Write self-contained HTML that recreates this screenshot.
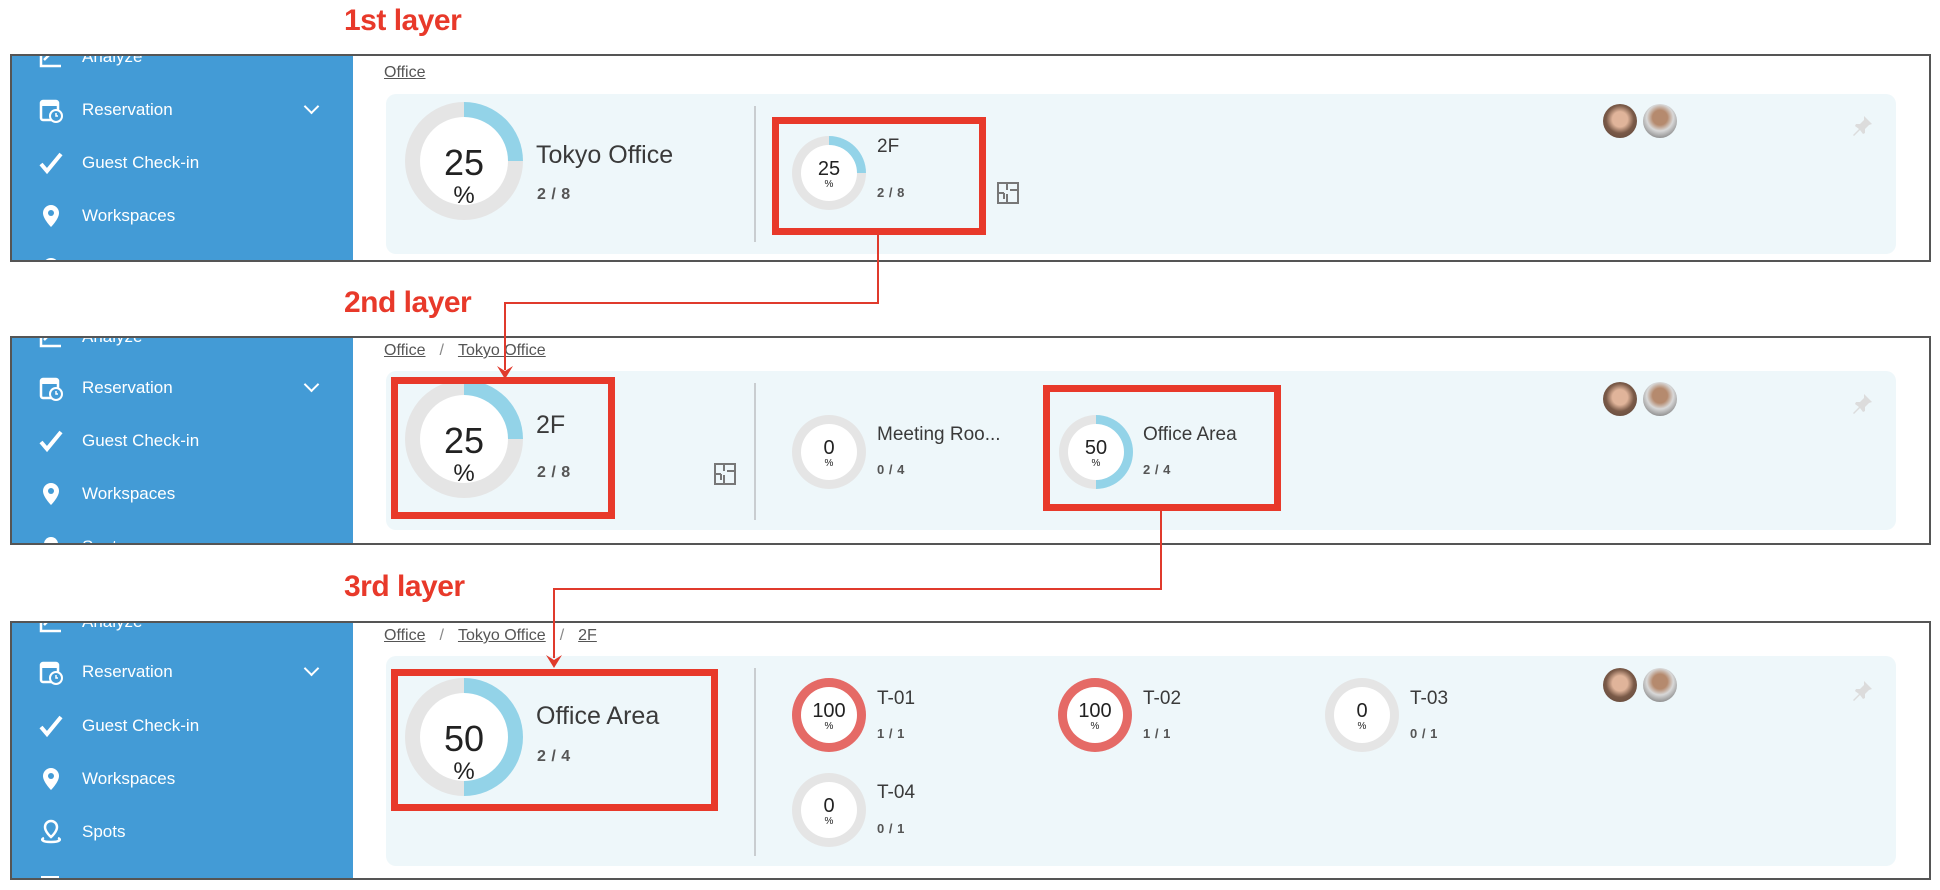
<!DOCTYPE html>
<html><head><meta charset="utf-8"><style>
*{margin:0;padding:0;box-sizing:border-box}
body{width:1940px;height:890px;background:#fff;position:relative;overflow:hidden;font-family:"Liberation Sans",sans-serif;color:#333}
.abs{position:absolute}
.lbl{position:absolute;left:344px;font-size:30px;font-weight:bold;color:#e8392a;letter-spacing:-0.5px}
.panel{position:absolute;left:10px;width:1921px;border:2px solid #555;background:#fff;overflow:hidden}
.side{position:absolute;left:0;top:0;bottom:0;width:341px;background:#439bd6;color:#fff;overflow:hidden}
.item{position:absolute;left:0;width:341px;height:30px;font-size:17px}
.item .ic{position:absolute;left:26px;top:2px;width:26px;height:26px}
.item .tx{position:absolute;left:70px;top:5px}
.chev{position:absolute;left:294px;top:6px;width:11px;height:11px;border-right:2px solid #fff;border-bottom:2px solid #fff;transform:rotate(45deg)}
.bc{position:absolute;left:384px;font-size:16px;color:#555}
.bc u{text-decoration:underline}
.bc span.sep{margin:0 14px;color:#888}
.card{position:absolute;left:386px;width:1510px;background:#eef7fa;border-radius:10px}
.div{position:absolute;left:745px;width:2px;background:#c9cdd0}
.donut{position:absolute;border-radius:50%}
.donut .in{position:absolute;border-radius:50%;background:#fff;text-align:center;color:#222}
.big{width:118px;height:118px}
.big .in{left:15px;top:15px;width:88px;height:88px}
.big .n{font-size:36px;line-height:36px;margin-top:28px}
.big .p{font-size:24px;line-height:22px;margin-top:4px}
.sm{width:74px;height:74px}
.sm .in{left:9px;top:9px;width:56px;height:56px}
.sm .n{font-size:20px;line-height:20px;margin-top:14px}
.sm .p{font-size:10px;line-height:12px}
.t1{position:absolute;font-size:25px;color:#3a3a3a}
.c1{position:absolute;font-size:16px;font-weight:bold;color:#555;letter-spacing:0.5px}
.t2{position:absolute;font-size:19px;color:#3a3a3a}
.c2{position:absolute;font-size:13px;font-weight:bold;color:#555;letter-spacing:0.5px}
.rb{position:absolute;border:7px solid #e8392a}
.ln{position:absolute;background:#e03a2c;z-index:5}
.av{position:absolute;width:34px;height:34px;border-radius:50%}
</style></head><body>

<div class="lbl" style="top:4px">1st layer</div>
<div class="lbl" style="top:286px">2nd layer</div>
<div class="lbl" style="top:570px">3rd layer</div>

<!-- PANEL 1 -->
<div class="panel" style="top:54px;height:208px">
 <div class="side">
  <div class="item" style="top:-14px"><svg class="ic" viewBox="0 0 26 26"><path d="M3 2v20h20" stroke="#fff" stroke-width="2.5" fill="none"/><path d="M6 16l7-7" stroke="#fff" stroke-width="2.5"/></svg><span class="tx">Analyze</span></div>
  <div class="item" style="top:39px"><svg class="ic" viewBox="0 0 26 26"><rect x="3" y="4" width="17" height="19" rx="2" fill="none" stroke="#fff" stroke-width="2.5"/><rect x="3" y="4" width="17" height="5" fill="#fff"/><circle cx="18" cy="19" r="6" fill="#439bd6" stroke="#fff" stroke-width="2"/><path d="M18 16v3h2" stroke="#fff" stroke-width="1.5" fill="none"/></svg><span class="tx">Reservation</span><div class="chev"></div></div>
  <div class="item" style="top:92px"><svg class="ic" viewBox="0 0 26 26"><path d="M3 14l6 7L23 4" stroke="#fff" stroke-width="4" fill="none"/></svg><span class="tx">Guest Check-in</span></div>
  <div class="item" style="top:145px"><svg class="ic" viewBox="0 0 26 26"><path d="M13 2a8 8 0 0 1 8 8c0 6-8 14-8 14S5 16 5 10a8 8 0 0 1 8-8z" fill="#fff"/><circle cx="13" cy="10" r="3" fill="#439bd6"/></svg><span class="tx">Workspaces</span></div>
  <div class="item" style="top:198px"><svg class="ic" viewBox="0 0 26 26"><circle cx="13" cy="10" r="8" fill="#fff"/></svg></div>
 </div>
</div>
<div class="bc" style="top:64px"><u>Office</u></div>
<div class="card" style="top:94px;height:160px"></div>
<div class="donut big" style="left:405px;top:102px;background:conic-gradient(#93d3e8 0 25%,#e5e5e5 0)"><div class="in"><div class="n">25</div><div class="p">%</div></div></div>
<div class="t1" style="left:536px;top:141px">Tokyo Office</div>
<div class="c1" style="left:537px;top:186px">2 / 8</div>
<div class="div" style="top:106px;height:136px;left:754px"></div>
<div class="donut sm" style="left:792px;top:136px;background:conic-gradient(#93d3e8 0 25%,#e5e5e5 0)"><div class="in"><div class="n">25</div><div class="p">%</div></div></div>
<div class="t2" style="left:877px;top:136px">2F</div>
<div class="c2" style="left:877px;top:185px">2 / 8</div>
<svg class="abs" style="left:996px;top:181px" width="24" height="24" viewBox="0 0 24 24"><path d="M2 2h20v20H2zM2 12h6M11 2v7M11 13v9M14 9h8M8 12v6" stroke="#777" stroke-width="2" fill="none"/></svg>
<div class="rb" style="left:772px;top:117px;width:214px;height:118px"></div>
<div class="av" style="left:1603px;top:104px;background:radial-gradient(circle at 50% 45%,#e0b49a 0 30%,#7a5a48 55%,#5a4438 100%)"></div>
<div class="av" style="left:1643px;top:104px;background:radial-gradient(circle at 50% 40%,#b58a6e 0 28%,#d8d8d8 50%,#555 100%)"></div>
<svg class="abs" style="left:1850px;top:114px" width="24" height="24" viewBox="0 0 24 24"><path d="M14 2l8 8-3 1-4 4 0 4-2 1-3-4-6 6-1-1 6-6-4-3 1-2 4 0 4-4z" fill="#dcdcdc"/></svg>

<!-- PANEL 2 -->
<div class="panel" style="top:336px;height:209px">
 <div class="side">
  <div class="item" style="top:-16px"><svg class="ic" viewBox="0 0 26 26"><path d="M3 2v20h20" stroke="#fff" stroke-width="2.5" fill="none"/><path d="M6 16l7-7" stroke="#fff" stroke-width="2.5"/></svg><span class="tx">Analyze</span></div>
  <div class="item" style="top:35px"><svg class="ic" viewBox="0 0 26 26"><rect x="3" y="4" width="17" height="19" rx="2" fill="none" stroke="#fff" stroke-width="2.5"/><rect x="3" y="4" width="17" height="5" fill="#fff"/><circle cx="18" cy="19" r="6" fill="#439bd6" stroke="#fff" stroke-width="2"/><path d="M18 16v3h2" stroke="#fff" stroke-width="1.5" fill="none"/></svg><span class="tx">Reservation</span><div class="chev"></div></div>
  <div class="item" style="top:88px"><svg class="ic" viewBox="0 0 26 26"><path d="M3 14l6 7L23 4" stroke="#fff" stroke-width="4" fill="none"/></svg><span class="tx">Guest Check-in</span></div>
  <div class="item" style="top:141px"><svg class="ic" viewBox="0 0 26 26"><path d="M13 2a8 8 0 0 1 8 8c0 6-8 14-8 14S5 16 5 10a8 8 0 0 1 8-8z" fill="#fff"/><circle cx="13" cy="10" r="3" fill="#439bd6"/></svg><span class="tx">Workspaces</span></div>
  <div class="item" style="top:194px"><svg class="ic" viewBox="0 0 26 26"><circle cx="13" cy="10" r="7" fill="#fff"/></svg><span class="tx">Spots</span></div>
 </div>
</div>
<div class="bc" style="top:342px"><u>Office</u><span class="sep">/</span><u>Tokyo Office</u></div>
<div class="card" style="top:371px;height:159px"></div>
<div class="donut big" style="left:405px;top:380px;background:conic-gradient(#93d3e8 0 25%,#e5e5e5 0)"><div class="in"><div class="n">25</div><div class="p">%</div></div></div>
<div class="t1" style="left:536px;top:411px">2F</div>
<div class="c1" style="left:537px;top:464px">2 / 8</div>
<svg class="abs" style="left:713px;top:462px" width="24" height="24" viewBox="0 0 24 24"><path d="M2 2h20v20H2zM2 12h6M11 2v7M11 13v9M14 9h8M8 12v6" stroke="#777" stroke-width="2" fill="none"/></svg>
<div class="rb" style="left:391px;top:377px;width:224px;height:142px"></div>
<div class="div" style="top:383px;height:137px;left:754px"></div>
<div class="donut sm" style="left:792px;top:415px;background:#e5e5e5"><div class="in"><div class="n">0</div><div class="p">%</div></div></div>
<div class="t2" style="left:877px;top:424px">Meeting Roo...</div>
<div class="c2" style="left:877px;top:462px">0 / 4</div>
<div class="donut sm" style="left:1059px;top:415px;background:conic-gradient(#93d3e8 0 50%,#e5e5e5 0)"><div class="in"><div class="n">50</div><div class="p">%</div></div></div>
<div class="t2" style="left:1143px;top:424px">Office Area</div>
<div class="c2" style="left:1143px;top:462px">2 / 4</div>
<div class="rb" style="left:1043px;top:385px;width:238px;height:126px"></div>
<div class="av" style="left:1603px;top:382px;background:radial-gradient(circle at 50% 45%,#e0b49a 0 30%,#7a5a48 55%,#5a4438 100%)"></div>
<div class="av" style="left:1643px;top:382px;background:radial-gradient(circle at 50% 40%,#b58a6e 0 28%,#d8d8d8 50%,#555 100%)"></div>
<svg class="abs" style="left:1850px;top:392px" width="24" height="24" viewBox="0 0 24 24"><path d="M14 2l8 8-3 1-4 4 0 4-2 1-3-4-6 6-1-1 6-6-4-3 1-2 4 0 4-4z" fill="#dcdcdc"/></svg>

<!-- PANEL 3 -->
<div class="panel" style="top:621px;height:259px">
 <div class="side">
  <div class="item" style="top:-16px"><svg class="ic" viewBox="0 0 26 26"><path d="M3 2v20h20" stroke="#fff" stroke-width="2.5" fill="none"/><path d="M6 16l7-7" stroke="#fff" stroke-width="2.5"/></svg><span class="tx">Analyze</span></div>
  <div class="item" style="top:34px"><svg class="ic" viewBox="0 0 26 26"><rect x="3" y="4" width="17" height="19" rx="2" fill="none" stroke="#fff" stroke-width="2.5"/><rect x="3" y="4" width="17" height="5" fill="#fff"/><circle cx="18" cy="19" r="6" fill="#439bd6" stroke="#fff" stroke-width="2"/><path d="M18 16v3h2" stroke="#fff" stroke-width="1.5" fill="none"/></svg><span class="tx">Reservation</span><div class="chev"></div></div>
  <div class="item" style="top:88px"><svg class="ic" viewBox="0 0 26 26"><path d="M3 14l6 7L23 4" stroke="#fff" stroke-width="4" fill="none"/></svg><span class="tx">Guest Check-in</span></div>
  <div class="item" style="top:141px"><svg class="ic" viewBox="0 0 26 26"><path d="M13 2a8 8 0 0 1 8 8c0 6-8 14-8 14S5 16 5 10a8 8 0 0 1 8-8z" fill="#fff"/><circle cx="13" cy="10" r="3" fill="#439bd6"/></svg><span class="tx">Workspaces</span></div>
  <div class="item" style="top:194px"><svg class="ic" viewBox="0 0 26 26"><path d="M13 2a6 6 0 0 1 6 6c0 5-6 10-6 10S7 13 7 8a6 6 0 0 1 6-6z" fill="none" stroke="#fff" stroke-width="2.5"/><path d="M6 19c-3 1-3 4 7 4s10-3 7-4" fill="none" stroke="#fff" stroke-width="2.5"/></svg><span class="tx">Spots</span></div>
  <div class="item" style="top:247px"><svg class="ic" viewBox="0 0 26 26"><rect x="3" y="4" width="18" height="8" fill="#fff"/></svg></div>
 </div>
</div>
<div class="bc" style="top:627px"><u>Office</u><span class="sep">/</span><u>Tokyo Office</u><span class="sep">/</span><u>2F</u></div>
<div class="card" style="top:656px;height:210px"></div>
<div class="donut big" style="left:405px;top:678px;background:conic-gradient(#93d3e8 0 50%,#e5e5e5 0)"><div class="in"><div class="n">50</div><div class="p">%</div></div></div>
<div class="t1" style="left:536px;top:702px">Office Area</div>
<div class="c1" style="left:537px;top:748px">2 / 4</div>
<div class="rb" style="left:391px;top:669px;width:327px;height:142px"></div>
<div class="div" style="top:668px;height:188px;left:754px"></div>
<div class="donut sm" style="left:792px;top:678px;background:#e56a66"><div class="in"><div class="n">100</div><div class="p">%</div></div></div>
<div class="t2" style="left:877px;top:688px">T-01</div>
<div class="c2" style="left:877px;top:726px">1 / 1</div>
<div class="donut sm" style="left:1058px;top:678px;background:#e56a66"><div class="in"><div class="n">100</div><div class="p">%</div></div></div>
<div class="t2" style="left:1143px;top:688px">T-02</div>
<div class="c2" style="left:1143px;top:726px">1 / 1</div>
<div class="donut sm" style="left:1325px;top:678px;background:#e5e5e5"><div class="in"><div class="n">0</div><div class="p">%</div></div></div>
<div class="t2" style="left:1410px;top:688px">T-03</div>
<div class="c2" style="left:1410px;top:726px">0 / 1</div>
<div class="donut sm" style="left:792px;top:773px;background:#e5e5e5"><div class="in"><div class="n">0</div><div class="p">%</div></div></div>
<div class="t2" style="left:877px;top:782px">T-04</div>
<div class="c2" style="left:877px;top:821px">0 / 1</div>
<div class="av" style="left:1603px;top:668px;background:radial-gradient(circle at 50% 45%,#e0b49a 0 30%,#7a5a48 55%,#5a4438 100%)"></div>
<div class="av" style="left:1643px;top:668px;background:radial-gradient(circle at 50% 40%,#b58a6e 0 28%,#d8d8d8 50%,#555 100%)"></div>
<svg class="abs" style="left:1850px;top:679px" width="24" height="24" viewBox="0 0 24 24"><path d="M14 2l8 8-3 1-4 4 0 4-2 1-3-4-6 6-1-1 6-6-4-3 1-2 4 0 4-4z" fill="#dcdcdc"/></svg>

<!-- connector 1 -->
<div class="ln" style="left:877px;top:235px;width:2px;height:68px"></div>
<div class="ln" style="left:504px;top:302px;width:375px;height:2px"></div>
<div class="ln" style="left:504px;top:302px;width:2px;height:68px"></div>
<svg class="abs" style="left:497px;top:366px;z-index:6" width="16" height="14"><path d="M0 0L8 13L16 0L8 5z" fill="#e03a2c"/></svg>

<!-- connector 2 -->
<div class="ln" style="left:1160px;top:511px;width:2px;height:78px"></div>
<div class="ln" style="left:553px;top:588px;width:609px;height:2px"></div>
<div class="ln" style="left:553px;top:588px;width:2px;height:70px"></div>
<svg class="abs" style="left:546px;top:655px;z-index:6" width="16" height="14"><path d="M0 0L8 13L16 0L8 5z" fill="#e03a2c"/></svg>
</body></html>
